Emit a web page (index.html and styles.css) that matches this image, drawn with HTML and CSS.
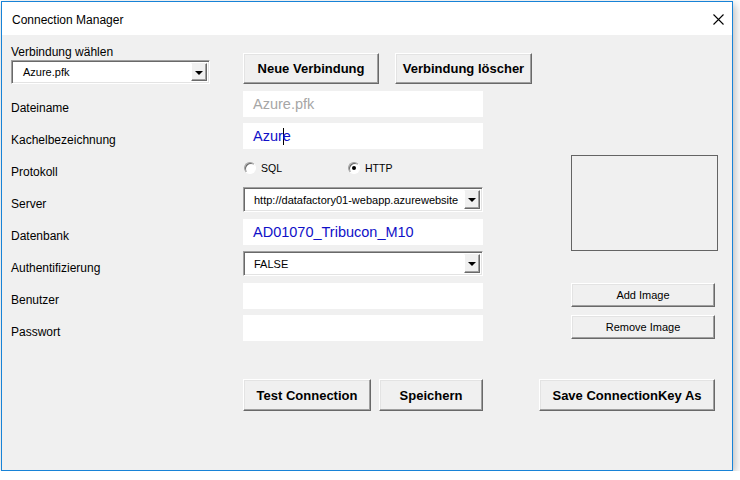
FILE: index.html
```html
<!DOCTYPE html>
<html lang="de">
<head>
<meta charset="utf-8">
<title>Connection Manager</title>
<link rel="stylesheet" href="styles.css">
</head>
<body>
<div class="window">
  <div class="titlebar">
    <span class="title">Connection Manager</span>
    <svg class="close" width="11" height="11" viewBox="0 0 11 11"><path d="M0.5 0.5 L10.5 10.5 M10.5 0.5 L0.5 10.5" stroke="#000" stroke-width="1.1" fill="none"/></svg>
  </div>
  <div class="content">
    <div class="header">
      <div class="pick">
        <div class="pick-label">Verbindung wählen</div>
        <div class="combo combo-pick"><span class="combo-text">Azure.pfk</span><span class="dd"><span class="tri"></span></span></div>
      </div>
      <button class="btn btn-bold btn-new">Neue Verbindung</button>
      <button class="btn btn-bold btn-del">Verbindung löscher</button>
    </div>

    <div class="form">
      <div class="label r1">Dateiname</div>
      <div class="field r1 field-gray">Azure.pfk</div>

      <div class="label r2">Kachelbezeichnung</div>
      <div class="field r2 field-blue">Azur<span class="caret"></span>e</div>

      <div class="label r3">Protokoll</div>
      <div class="radios r3">
        <span class="radio-opt"><span class="radio"></span>SQL</span>
        <span class="radio-opt"><span class="radio checked"></span>HTTP</span>
      </div>
      <div class="imagebox"></div>

      <div class="label r4">Server</div>
      <div class="combo combo-field r4"><span class="combo-text">http://datafactory01-webapp.azurewebsite</span><span class="dd"><span class="tri"></span></span></div>

      <div class="label r5">Datenbank</div>
      <div class="field r5 field-blue">AD01070_Tribucon_M10</div>

      <div class="label r6">Authentifizierung</div>
      <div class="combo combo-field r6"><span class="combo-text">FALSE</span><span class="dd"><span class="tri"></span></span></div>

      <div class="label r7">Benutzer</div>
      <div class="field r7"></div>
      <button class="btn btn-small r7">Add Image</button>

      <div class="label r8">Passwort</div>
      <div class="field r8"></div>
      <button class="btn btn-small r8">Remove Image</button>
    </div>

    <div class="actions">
      <button class="btn btn-bold btn-test">Test Connection</button>
      <button class="btn btn-bold btn-save">Speichern</button>
      <button class="btn btn-bold btn-key">Save ConnectionKey As</button>
    </div>
  </div>
</div>
</body>
</html>
```
FILE: styles.css
```css
* { box-sizing: border-box; }

html, body {
  margin: 0;
  padding: 0;
  background: #ffffff;
}

body {
  font-family: "Liberation Sans", Arial, sans-serif;
  color: #000;
}

.window {
  margin: 1px 0 0 1px;
  width: 732px;
  height: 470px;
  border: 1px solid #1883d7;
  background: #f0f0f0;
  box-shadow: 2px 3px 9px rgba(0, 0, 0, 0.28);
  display: flex;
  flex-direction: column;
}

.titlebar {
  height: 33px;
  background: #ffffff;
  display: flex;
  justify-content: space-between;
  align-items: flex-start;
  padding: 0 8px 0 10px;
  flex-shrink: 0;
}

.title {
  font-size: 12px;
  line-height: 14px;
  margin-top: 11px;
}

.close {
  margin-top: 12px;
  display: block;
}

.content {
  flex: 1;
  background: #f0f0f0;
  padding: 10px 0 0 9px;
}

/* header */
.header {
  display: flex;
  align-items: flex-end;
}

.pick {
  width: 232px;
  flex-shrink: 0;
}

.pick-label {
  font-size: 12px;
  line-height: 14px;
  margin-bottom: 1px;
}

/* buttons */
.btn {
  font-family: "Liberation Sans", Arial, sans-serif;
  color: #000;
  background: #f0f0f0;
  border: 1px solid;
  border-color: #ffffff #696969 #696969 #ffffff;
  box-shadow: inset -1px -1px 0 #a0a0a0, inset 1px 1px 0 #e3e3e3;
  padding: 0;
  margin: 0;
  display: flex;
  align-items: center;
  justify-content: center;
  white-space: nowrap;
}

.btn-bold {
  font-weight: bold;
  font-size: 13px;
}

.btn-new {
  width: 136px;
  height: 31px;
}

.btn-del {
  width: 137px;
  height: 31px;
  margin-left: 16px;
}

.btn-small {
  font-size: 11px;
  width: 144px;
  height: 24px;
  grid-column: 4;
  align-self: start;
  justify-self: start;
}

/* combo boxes */
.combo {
  display: flex;
  align-items: stretch;
  background: #ffffff;
  border: 1px solid;
  border-color: #a0a0a0 #ffffff #ffffff #a0a0a0;
  box-shadow: inset 1px 1px 0 #696969, inset -1px -1px 0 #e3e3e3;
  padding: 2px;
  font-size: 11px;
}

.combo-text {
  flex: 1;
  overflow: hidden;
  white-space: nowrap;
  display: flex;
  align-items: center;
  padding-left: 8px;
}

.combo-pick {
  width: 199px;
  height: 24px;
}

.combo-pick .combo-text {
  padding-left: 9px;
}

.combo-field {
  grid-column: 2;
  height: 25px;
  align-self: start;
}

.dd {
  width: 16px;
  flex-shrink: 0;
  background: #f0f0f0;
  border: 1px solid;
  border-color: #f0f0f0 #696969 #696969 #ffffff;
  box-shadow: inset -1px -1px 0 #a0a0a0;
  display: flex;
  align-items: center;
  justify-content: center;
}

.tri {
  width: 0;
  height: 0;
  border-left: 4px solid transparent;
  border-right: 4px solid transparent;
  border-top: 4px solid #000;
  margin-top: 1px;
}

/* form grid */
.form {
  display: grid;
  grid-template-columns: 232px 240px 88px 147px;
  grid-template-rows: repeat(8, 26px);
  row-gap: 6px;
  margin-top: 7px;
}

.r1 { grid-row: 1; }
.r2 { grid-row: 2; }
.r3 { grid-row: 3; }
.r4 { grid-row: 4; }
.r5 { grid-row: 5; }
.r6 { grid-row: 6; }
.r7 { grid-row: 7; }
.r8 { grid-row: 8; }

.label {
  grid-column: 1;
  font-size: 12px;
  line-height: 14px;
  padding-top: 10px;
}

.field {
  grid-column: 2;
  background: #ffffff;
  font-size: 14.5px;
  line-height: 26px;
  padding-left: 10px;
  white-space: nowrap;
  overflow: hidden;
}

.field-gray { color: #a6a6a6; }
.field-blue { color: #1010c8; }

.caret {
  display: inline-block;
  width: 0;
  height: 17px;
  border-left: 1px solid #000;
  margin-right: -1px;
  vertical-align: -4px;
}

.radios {
  grid-column: 2;
  display: flex;
  align-items: center;
  padding-left: 1px;
}

.radio-opt {
  display: flex;
  align-items: center;
  font-size: 10.5px;
  width: 104px;
}

.radio {
  width: 12px;
  height: 12px;
  border-radius: 50%;
  background: #ffffff;
  border: 1px solid;
  border-color: #a0a0a0 #ffffff #ffffff #a0a0a0;
  box-shadow: inset 1px 1px 0 #696969;
  margin-right: 5px;
  position: relative;
  flex-shrink: 0;
}

.radio.checked::after {
  content: "";
  position: absolute;
  left: 3px;
  top: 3px;
  width: 4px;
  height: 4px;
  border-radius: 50%;
  background: #000;
}

.imagebox {
  grid-column: 4;
  grid-row: 3 / span 4;
  align-self: start;
  height: 96px;
  border: 1px solid #646464;
}

/* bottom actions */
.actions {
  display: flex;
  margin-top: 38px;
  padding-left: 232px;
}

.btn-test {
  width: 128px;
  height: 32px;
}

.btn-save {
  width: 104px;
  height: 32px;
  margin-left: 8px;
}

.btn-key {
  width: 176px;
  height: 32px;
  margin-left: 56px;
}
```
